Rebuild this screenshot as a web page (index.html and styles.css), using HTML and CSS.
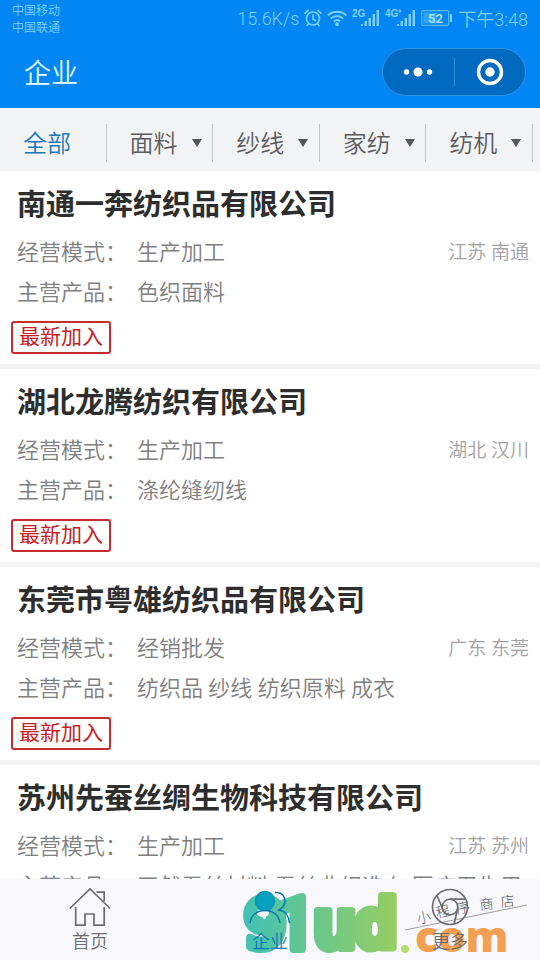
FILE: index.html
```html
<!DOCTYPE html>
<html lang="zh-CN">
<head>
<meta charset="utf-8">
<meta name="viewport" content="width=device-width, initial-scale=1">
<title>企业</title>
<link rel="stylesheet" href="styles.css">
</head>
<body>
<div class="app">
  <header class="header">
    <div class="status">
      <div class="carriers"><span>中国移动</span><span>中国联通</span></div>
      <div class="indicators">
        <span>15.6K/s</span>
        <svg viewBox="0 0 18 18" width="18" height="18" fill="none" stroke="currentColor" stroke-width="1.6" stroke-linecap="round"><circle cx="9" cy="9.5" r="6.5"/><path d="M1 4.2 4.2 1.3M17 4.2 13.8 1.3M9 6v4l2.6 1.6M4.6 14.6 3 16.6M13.4 14.6 15 16.6"/></svg>
        <svg viewBox="0 0 20 18" width="20" height="18" fill="none" stroke="currentColor" stroke-width="2"><path d="M.8 6.4c5.2-5 13.2-5 18.4 0M3.8 9.6c3.5-3.4 8.9-3.4 12.4 0M6.800 12.5c1.9-1.7 4.5-1.7 6.4 0"/><circle cx="10" cy="15.3" r="1"/></svg>
        <svg viewBox="0 0 28 18" width="28" height="18" fill="currentColor"><text x="0" y="8" class="net">2G</text><path d="M9 15h2v2H9zM12.600 12h2.400v5h-2.400zM16.600 9h2.400v8h-2.400zM20.600 5h2.400v12h-2.400zM24.600 1H27v16h-2.400z"/></svg>
        <svg viewBox="0 0 31 18" width="31" height="18" fill="currentColor"><text x="0" y="8" class="net">4G⁺</text><path d="M12 15h2v2h-2zM15.600 12H18v5h-2.400zM19.600 9H22v8h-2.400zM23.600 5H26v12h-2.400zM27.600 1H30v16h-2.400z"/></svg>
        <svg viewBox="0 0 32 16" width="32" height="16"><rect x=".7" y=".7" width="27" height="14.600" rx="1.500" fill="none" stroke="currentColor" stroke-width="1.200" opacity=".7"/><path d="M2.500 2.500H16v11H2.500z" fill="currentColor" opacity=".4"/><path d="M29 4h2v8h-2z" fill="currentColor"/><text x="7" y="12.500" class="level">52</text></svg>
        <span>下午3:48</span>
      </div>
    </div>
    <div class="titlebar">
      <h1>企业</h1>
      <div class="capsule">
        <button type="button" aria-label="更多选项"><svg viewBox="0 0 30 12" width="30" height="12" fill="#fff"><circle cx="3.500" cy="6" r="2.700"/><circle cx="15" cy="6" r="4.600"/><circle cx="26.500" cy="6" r="2.700"/></svg></button>
        <button type="button" aria-label="关闭"><svg viewBox="0 0 28 28" width="28" height="28"><circle cx="14" cy="14" r="11.500" fill="none" stroke="#fff" stroke-width="3.400"/><circle cx="14" cy="14" r="4.700" fill="#fff"/></svg></button>
      </div>
    </div>
  </header>

  <nav class="filters">
    <button type="button" class="active">全部</button>
    <button type="button">面料<i class="caret"></i></button>
    <button type="button">纱线<i class="caret"></i></button>
    <button type="button">家纺<i class="caret"></i></button>
    <button type="button">纺机<i class="caret"></i></button>
  </nav>

  <main class="list">
    <article class="card">
      <h2>南通一奔纺织品有限公司</h2>
      <div class="row"><span class="label">经营模式：</span><span class="value">生产加工</span><span class="region">江苏 南通</span></div>
      <div class="row"><span class="label">主营产品：</span><span class="value">色织面料</span></div>
      <span class="tag">最新加入</span>
    </article>
    <article class="card">
      <h2>湖北龙腾纺织有限公司</h2>
      <div class="row"><span class="label">经营模式：</span><span class="value">生产加工</span><span class="region">湖北 汉川</span></div>
      <div class="row"><span class="label">主营产品：</span><span class="value">涤纶缝纫线</span></div>
      <span class="tag">最新加入</span>
    </article>
    <article class="card">
      <h2>东莞市粤雄纺织品有限公司</h2>
      <div class="row"><span class="label">经营模式：</span><span class="value">经销批发</span><span class="region">广东 东莞</span></div>
      <div class="row"><span class="label">主营产品：</span><span class="value">纺织品 纱线 纺织原料 成衣</span></div>
      <span class="tag">最新加入</span>
    </article>
    <article class="card">
      <h2>苏州先蚕丝绸生物科技有限公司</h2>
      <div class="row"><span class="label">经营模式：</span><span class="value">生产加工</span><span class="region">江苏 苏州</span></div>
      <div class="row"><span class="label">主营产品：</span><span class="value">天然蚕丝材料 蚕丝非织造布 医疗卫生用</span></div>
    </article>
  </main>

  <nav class="tabbar">
    <svg class="watermark" viewBox="0 0 300 81" width="300" height="81" aria-hidden="true">
      <defs><linearGradient id="brand" gradientUnits="userSpaceOnUse" x1="0" y1="0" x2="155" y2="0"><stop offset="0" stop-color="#3fc1b5"/><stop offset="1" stop-color="#96cd64"/></linearGradient></defs>
      <g class="brand"><text x="5" y="69">9</text><text x="36" y="70" class="one">1</text><text x="74" y="69">u</text><text x="115" y="69">d</text></g>
      <circle cx="166" cy="70" r="4" fill="#b9de6c"/>
      <text x="176" y="73" class="com">com</text>
      <path d="M166 51 288 26" stroke="#777" stroke-width=".7"/>
      <g class="script"><text transform="translate(179 45) rotate(-12)">小</text><text transform="translate(198 39) rotate(-12)">程</text><text transform="translate(218 35) rotate(-10)">序</text><text transform="translate(241 31) rotate(-6)">商</text><text transform="translate(262 28) rotate(-6)">店</text></g>
    </svg>
    <a href="#home"><svg viewBox="0 0 42 40" width="42" height="40" fill="none" stroke="currentColor" stroke-width="1.700"><path d="M.8 21.500 21 2l20.200 19.500M27.500 5.200h7.700v9M6.700 20v18.200H16V27h9v11.200h10.200V20"/></svg><span>首页</span></a>
    <a href="#company" class="current"><svg viewBox="0 0 42 40" width="42" height="40" fill="none" stroke="currentColor" stroke-width="1.500"><ellipse cx="14" cy="26" rx="6" ry="4" fill="#f9f9fd" stroke="none"/><circle cx="16" cy="14" r="9.500" fill="#08a0bd" stroke="#0893b8"/><path d="M1 36c1-8 7-12.500 15-12.500S30 28 31 36M26 5.500C33 5 36 9 36 14c0 4-2.500 7-6 9 6 1 10 6 10.500 13"/></svg><span>企业</span></a>
    <a href="#more"><svg viewBox="0 0 42 40" width="42" height="40" fill="none" stroke="currentColor" stroke-width="1.700"><circle cx="21" cy="20" r="17.500"/><circle cx="21" cy="20" r="7.800"/><path d="M21 12.200h16M28.500 22.500 25 37M13.500 21.500 8 8.500"/></svg><span>更多</span></a>
  </nav>
</div>
</body>
</html>
```
FILE: styles.css
```css
* { box-sizing: border-box; }
body { margin: 0; font-family: Roboto, "Noto Sans CJK SC", sans-serif; color: #333; background: #fff; }
button { font: inherit; color: inherit; background: none; border: 0; padding: 0; }
h1, h2 { margin: 0; }
.app { display: flex; flex-direction: column; height: 100vh; overflow: hidden; }

.header { background: #0286f3; color: #7fd0fb; }
.status { display: flex; justify-content: space-between; height: 36px; padding: 2px 12px 0; }
.carriers { display: flex; flex-direction: column; padding-top: 1px; font-size: 12px; line-height: 17px; font-weight: 350; }
.indicators { display: flex; align-items: center; gap: 5px; padding-bottom: 2px; font-size: 18px; font-weight: 350; }
.net { font: bold 10px "Liberation Sans Narrow", sans-serif; }
.level { font: bold 13px Roboto, sans-serif; fill: #a5e0ff; }
.titlebar { display: flex; justify-content: space-between; align-items: center; height: 72px; padding: 0 14px 0 24px; }
.titlebar h1 { padding-top: 4px; font-size: 27px; line-height: 40px; font-weight: 350; color: #e8ffff; }
.capsule { display: flex; align-items: center; width: 144px; height: 48px; border: 1px solid #2f93e3; border-radius: 24px; background: #0069c0; }
.capsule button { flex: 1; display: flex; align-items: center; justify-content: center; height: 28px; }
.capsule button + button { border-left: 1px solid #2a8ada; }

.filters { display: flex; height: 63px; padding: 16px 7px 9px 0; background: #f2f3f5; color: #5c5c5e; font-size: 24px; font-weight: 350; }
.filters button { flex: 1; display: flex; align-items: center; gap: 14px; padding: 0 0 4px 23px; border-right: 1px solid #c4c4c6; }
.filters .active { color: #1979b8; }
.caret { margin-top: 4px; border: 5px solid transparent; border-top: 8px solid #555; border-bottom: 0; }

.list { flex: 1; min-height: 0; overflow: hidden; }
.card { height: 198px; padding: 13px 11px 0 17px; border-bottom: 5px solid #f3f3f4; }
.card h2 { font-size: 29px; line-height: 42px; font-weight: 700; color: #2e2e2e; margin-bottom: 4px; }
.row { display: flex; align-items: center; height: 40px; font-size: 22px; font-weight: 350; color: #808080; white-space: nowrap; }
.label { width: 120px; }
.region { margin-left: auto; font-size: 19px; color: #a2a2a2; }
.tag { display: block; width: max-content; margin: 11px 0 0 -6px; padding: 0 6px; border: 2px solid #c62b2f; border-radius: 3px; font-size: 21px; line-height: 29px; color: #c51c22; }

.tabbar { position: relative; display: flex; height: 81px; background: #f9f9fd; }
.tabbar a { position: relative; flex: 1; display: flex; flex-direction: column; align-items: center; padding-top: 8px; color: #6b6d70; font-size: 18px; line-height: 30px; font-weight: 350; text-decoration: none; }
.tabbar .current { color: #0a78b5; }
.watermark { position: absolute; left: 239px; top: 0; pointer-events: none; }
.brand { font: 700 68px "Liberation Sans Narrow", "DejaVu Sans Condensed", sans-serif; fill: url(#brand); stroke: url(#brand); stroke-width: 8px; stroke-linejoin: round; }
.brand .one { font: 500 72px Roboto, sans-serif; }
.com { font: 800 43px "Open Sans", sans-serif; fill: #f4a052; }
.script { font: 300 14px "Noto Sans CJK SC", sans-serif; fill: #555; }
```
